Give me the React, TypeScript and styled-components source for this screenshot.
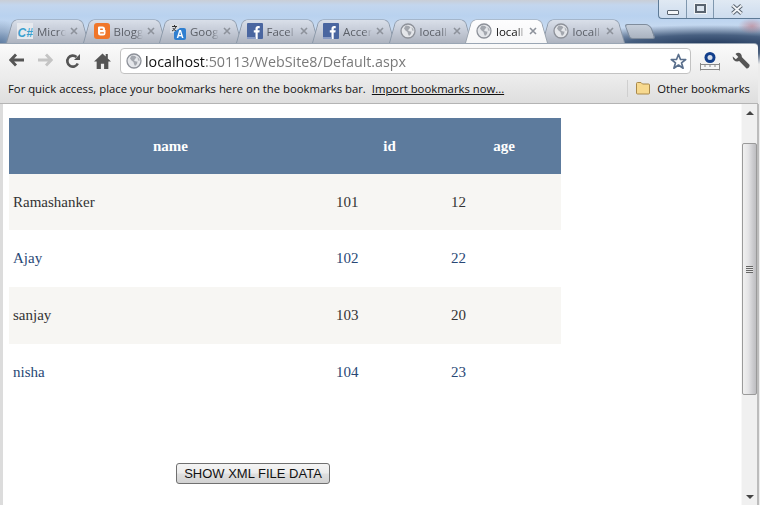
import React from 'react';
import styled, { createGlobalStyle } from 'styled-components';

const GlobalStyle = createGlobalStyle`
  html, body {
    margin: 0;
    padding: 0;
    overflow: hidden;
  }
`;

const Frame = styled.div`
  position: relative;
  width: 760px;
  height: 505px;
  display: flex;
  flex-direction: column;
  overflow: hidden;
  background:
    radial-gradient(ellipse 14px 8px at 752px 26px, rgba(190, 110, 120, 0.55) 0%, rgba(190, 110, 120, 0) 100%),
    radial-gradient(ellipse 170px 20px at 710px 45px, #22385a 0%, rgba(50, 75, 110, 0.85) 50%, rgba(120, 150, 190, 0) 100%),
    radial-gradient(ellipse 30px 24px at 0px 44px, #5c7a9f 0%, rgba(110, 140, 175, 0) 100%),
    linear-gradient(180deg, #c9ced6 0px, #c3d6ee 5px, #b9d2ef 16px, #cbdcf1 32px, #b7cbe3 44px, #ececec 44px);
`;

const WindowControls = styled.div`
  position: absolute;
  top: 0;
  right: 0;
  width: 102px;
  height: 19px;
  display: flex;
  box-sizing: border-box;
  border: 1px solid #5d7a96;
  border-top: none;
  border-right: none;
  border-bottom-left-radius: 4px;
  background: linear-gradient(180deg, #e0e9f3, #cddcee);
`;

const WindowButton = styled.div<{ $w: number }>`
  width: ${p => p.$w}px;
  display: flex;
  align-items: center;
  justify-content: center;
  border-right: 1px solid #7f97ae;
  box-sizing: border-box;
  &:last-child {
    border-right: none;
  }
`;

const MinGlyph = styled.div`
  width: 10px;
  height: 3px;
  margin-top: 6px;
  background: #f4f6f8;
  border: 1px solid #59636f;
  border-radius: 1px;
`;

const MaxGlyph = styled.div`
  width: 7px;
  height: 5px;
  margin-top: -1px;
  border: 2px solid #59636f;
  outline: 1px solid #f0f3f6;
  background: #dbe4ee;
`;

const TabStrip = styled.div`
  height: 43px;
  padding: 19px 0 0 6px;
  box-sizing: border-box;
  display: flex;
  flex: none;
`;

const Tab = styled.div<{ $active?: boolean }>`
  position: relative;
  z-index: ${p => (p.$active ? 2 : 1)};
  width: 82.5px;
  margin-right: -6px;
  height: 24px;
  flex: none;
  box-sizing: border-box;
  padding: 0 0 0 11px;
  display: flex;
  align-items: center;
  font-family: "Open Sans", "Noto Sans", sans-serif;
  font-size: 11.5px;
  color: ${p => (p.$active ? '#111' : '#5c6068')};
  &::before {
    content: '';
    position: absolute;
    inset: -5px 0 0 0;
    z-index: -1;
    border: 1px solid ${p => (p.$active ? '#9aa3ae' : '#8b98a8')};
    border-bottom: none;
    border-radius: 6px 6px 0 0;
    background: ${p => (p.$active
      ? 'linear-gradient(180deg, #fdfdfe, #f7f7f8)'
      : 'linear-gradient(180deg, #d9dfe9 0%, #c6ccd8 50%, #aeb4c0 100%)')};
    transform: perspective(36px) rotateX(14deg);
    transform-origin: bottom;
  }
`;

const TabLabel = styled.span`
  width: 29px;
  margin: 0 4px;
  overflow: hidden;
  white-space: nowrap;
  -webkit-mask-image: linear-gradient(90deg, #000 72%, transparent 100%);
  mask-image: linear-gradient(90deg, #000 72%, transparent 100%);
`;

const NewTab = styled.div`
  width: 24px;
  height: 13px;
  margin: 5px 0 0 9px;
  flex: none;
  border: 1px solid #7f8c9c;
  border-radius: 3px 5px 3px 3px;
  background: linear-gradient(180deg, #c6cfdb, #aab3c0);
  transform: skewX(20deg);
`;

const Toolbar = styled.div`
  height: 34px;
  margin-right: 2px;
  flex: none;
  position: relative;
  z-index: 1;
  display: flex;
  align-items: center;
  padding: 1px 8px 0 0;
  box-sizing: border-box;
  border-top: 1px solid #9aa6b4;
  border-top-right-radius: 4px;
  background: linear-gradient(180deg, #fafafa, #ececec);
`;

const NavIcon = styled.div<{ $w?: number }>`
  width: ${p => p.$w ?? 28}px;
  display: flex;
  justify-content: center;
  flex: none;
`;

const NavGroup = styled.div`
  display: flex;
  padding-left: 3px;
  width: 120px;
  box-sizing: border-box;
  flex: none;
`;

const Mirrored = styled.span`
  display: flex;
  transform: scaleX(-1);
`;

const Omnibox = styled.div`
  width: 571px;
  height: 26px;
  flex: none;
  box-sizing: border-box;
  display: flex;
  align-items: center;
  padding: 0 3px 0 5px;
  border: 1px solid #c2c2c2;
  border-radius: 4px;
  background: #fff;
  font-family: "Open Sans", "Noto Sans", sans-serif;
  font-size: 14.3px;
`;

const UrlText = styled.span`
  margin-left: 3px;
  flex: 1;
  color: #7a7a7a;
  white-space: nowrap;
  b {
    font-weight: 400;
    color: #111;
  }
`;

const BookmarkBar = styled.div`
  height: 27px;
  flex: none;
  margin-right: 2px;
  display: flex;
  align-items: center;
  box-sizing: border-box;
  padding: 0 8px 4px 8px;
  border-bottom: 1px solid #b4b4b4;
  background: linear-gradient(180deg, #ececec, #dedede);
  font-family: "Open Sans", "Noto Sans", sans-serif;
  font-size: 11.3px;
  color: #111;
  white-space: nowrap;
`;

const ImportLink = styled.span`
  margin-left: 6px;
  text-decoration: underline;
`;

const OtherBookmarks = styled.div`
  margin-left: auto;
  display: flex;
  align-items: center;
  gap: 6px;
  padding-left: 7px;
  border-left: 1px solid #cfcfcf;
  height: 17px;
`;

const Body = styled.div`
  flex: 1;
  min-height: 0;
  display: flex;
  margin-right: 1px;
  background: #fff;
  border-left: 3px solid #dcdcdc;
  border-right: 2px solid #bcbcbc;
`;

const Page = styled.div`
  flex: 1;
  padding: 14px 0 0 6px;
  min-width: 0;
`;

const Grid = styled.table`
  width: 552px;
  border-collapse: collapse;
  table-layout: fixed;
  font-family: "Liberation Serif", "Times New Roman", serif;
  font-size: 15px;
`;

const HeadCell = styled.th`
  height: 56px;
  padding: 0;
  background: #5d7b9d;
  color: #fff;
  font-weight: 700;
  text-align: center;
`;

const Row = styled.tr<{ $alt: boolean }>`
  background: ${p => (p.$alt ? '#f7f6f3' : '#fff')};
  color: ${p => (p.$alt ? '#333333' : '#284775')};
`;

const Cell = styled.td<{ $h: number }>`
  height: ${p => p.$h}px;
  padding: 0 4px;
`;

const DataButton = styled.button`
  display: block;
  width: 154px;
  height: 21px;
  margin: 63px 0 0 167px;
  padding: 0;
  box-sizing: border-box;
  border: 1px solid #707070;
  border-radius: 3px;
  background: linear-gradient(180deg, #f4f4f4 0%, #ececec 48%, #dfdfdf 52%, #d2d2d2 100%);
  font-family: "Liberation Sans", Arial, sans-serif;
  font-size: 13px;
  color: #111;
`;

const Scrollbar = styled.div`
  width: 16px;
  flex: none;
  display: flex;
  flex-direction: column;
  align-items: center;
  background: #f0f0f0;
  border-left: 1px solid #f8f8f8;
  box-sizing: border-box;
`;

const ScrollArrow = styled.div<{ $up?: boolean }>`
  height: 17px;
  width: 100%;
  flex: none;
  display: flex;
  align-items: center;
  justify-content: center;
  &::after {
    content: '';
    width: 0;
    height: 0;
    border-left: 4px solid transparent;
    border-right: 4px solid transparent;
    ${p => (p.$up ? 'border-bottom: 4px solid #444;' : 'border-top: 4px solid #444;')}
  }
`;

const ScrollTrack = styled.div`
  flex: 1;
  width: 100%;
  padding-top: 22px;
  box-sizing: border-box;
`;

const ScrollThumb = styled.div`
  height: 252px;
  box-sizing: border-box;
  border: 1px solid #9a9a9a;
  border-radius: 2px;
  background: linear-gradient(90deg, #f0f0f0 0%, #e4e4e6 40%, #cfcfd2 70%, #bdbdc0 100%);
  display: flex;
  align-items: center;
  justify-content: center;
`;

const Grip = styled.div`
  width: 7px;
  height: 7px;
  background: repeating-linear-gradient(180deg, #666 0, #666 1px, #e6e6e6 1px, #e6e6e6 2px);
`;

const Glyph = styled.svg`
  flex: none;
`;

const WideGlyph = styled.svg`
  flex: none;
  margin: 0 -1px;
`;

type FaviconKind = 'csharp' | 'blogger' | 'translate' | 'facebook' | 'globe';

const Globe = () => (
  <Glyph width="16" height="16" viewBox="0 0 16 16">
    <circle cx="8" cy="8" r="7" fill="#e4e6ea" stroke="#8d9199" strokeWidth="1.3" />
    <path d="M6 2.5l3 .5 1.500 1.500-1.500 1.500-1 1.500 2 1 1.500 0-.5 2.500-2 2-1-2-.5-2-2-1.500-1.500-2 1-2z" fill="#a3a7ae" />
    <path d="M11.500 4l2 2v2l-1.500-.5z" fill="#b0b4ba" />
  </Glyph>
);

const Favicon = ({ kind }: { kind: FaviconKind }) => {
  if (kind === 'csharp') {
    return (
      <Glyph width="16" height="16" viewBox="0 0 16 16">
        <rect width="16" height="16" fill="#e6e9ee" />
        <text x="0.5" y="13.5" fontFamily="Liberation Sans, sans-serif" fontWeight="700" fontStyle="italic" fontSize="12" fill="#3aa0cf">C#</text>
      </Glyph>
    );
  }
  if (kind === 'blogger') {
    return (
      <Glyph width="16" height="16" viewBox="0 0 16 16">
        <rect width="16" height="16" rx="3" fill="#f0762a" />
        <path d="M5 3.500h3.500a2.500 2.500 0 0 1 2.500 2.500v1h.5v3.200a2.300 2.300 0 0 1-2.300 2.300H6.300A2.300 2.300 0 0 1 4 10.200V4.500a1 1 0 0 1 1-1z" fill="#fff" />
        <rect x="6" y="5.600" width="3" height="1.300" rx=".6" fill="#f0762a" />
        <rect x="6" y="9.200" width="4" height="1.300" rx=".6" fill="#f0762a" />
      </Glyph>
    );
  }
  if (kind === 'translate') {
    return (
      <WideGlyph width="18" height="17" viewBox="0 0 18 17">
        <path d="M1 1h9v9H1z" fill="#d9dde3" />
        <path d="M3 3.500h5M5.500 2v1.500M7 3.500c-.5 2-2 3.500-4 4.500M4 5c.5 1.300 1.500 2.300 3 3" stroke="#333" fill="none" />
        <path d="M5 9l6-4h4a2 2 0 0 1 2 2v8a2 2 0 0 1-2 2H7a2 2 0 0 1-2-2z" fill="#2f7fd0" />
        <text x="7.5" y="15" fontFamily="Liberation Sans, sans-serif" fontWeight="700" fontSize="10" fill="#fff">A</text>
      </WideGlyph>
    );
  }
  if (kind === 'facebook') {
    return (
      <Glyph width="16" height="16" viewBox="0 0 16 16">
        <rect width="16" height="16" rx="1" fill="#4a66a0" />
        <path d="M8.500 16V9.500H6.800V7.200h1.700V5.600C8.500 3.900 9.500 3 11 3h1.700v2.200h-1.100c-.7 0-.9.300-.9.900v1.100h2l-.3 2.300h-1.700V16z" fill="#fff" />
        <rect y="14" width="8.500" height="2" fill="#8a9cc5" />
      </Glyph>
    );
  }
  return <Globe />;
};

const BackIcon = ({ color }: { color: string }) => (
  <svg width="16" height="14" viewBox="0 0 16 14">
    <path d="M7 1.500L1.800 7 7 12.500M2.500 7H15" fill="none" stroke={color} strokeWidth="2.800" />
  </svg>
);

const ReloadIcon = () => (
  <svg width="16" height="16" viewBox="0 0 16 16">
    <path d="M12.800 10.500A5.500 5.500 0 1 1 11.500 4" fill="none" stroke="#555" strokeWidth="2.600" />
    <path d="M9 7h6V1z" fill="#555" />
  </svg>
);

const HomeIcon = () => (
  <svg width="17" height="16" viewBox="0 0 16 15">
    <path d="M8 .5L0 8h2.500v7h4v-5h3v5h4V8H16l-3-2.800V1h-2v2.300z" fill="#555" />
  </svg>
);

const StarIcon = () => (
  <svg width="17" height="17" viewBox="0 0 17 17">
    <path d="M8.500 1.500l2 5h5.200l-4.200 3.300 1.600 5.400-4.600-3.200-4.600 3.200 1.600-5.400L1.300 6.500h5.200z" fill="#fff" stroke="#5a6f8c" strokeWidth="1.700" strokeLinejoin="round" />
  </svg>
);

const ExtensionIcon = () => (
  <svg width="20" height="19" viewBox="0 0 20 19">
    <circle cx="10" cy="5.500" r="5.500" fill="#123f8c" />
    <circle cx="10" cy="5.500" r="2.500" fill="#d5deec" />
    <path d="M.5 12.500h19v5H.5z" fill="#f6f6f6" stroke="#8a8a8a" />
    <path d="M.5 11v7.500M19.500 11v7.500M5 13v2M10 13v2M15 13v2" stroke="#8a8a8a" />
  </svg>
);

const WrenchIcon = () => (
  <svg width="18" height="18" viewBox="0 0 18 18">
    <path d="M.8 4.500L3.800 7.200 6.300 5 3.500 1.900C6-.6 9.900 1 9.800 4.500c0 .4 0 .6.200.8l7.500 7.500c.5 1.700-1 3.900-3 3.600L7.200 9C4 10.600.2 8 .8 4.500z" fill="#555" />
  </svg>
);

const FolderIcon = () => (
  <svg width="16" height="14" viewBox="0 0 16 14">
    <path d="M1.500 2.500a1 1 0 0 1 1-1H6l1.500 1.500h6a1 1 0 0 1 1 1v8a1 1 0 0 1-1 1h-11a1 1 0 0 1-1-1z" fill="#f7d98f" stroke="#a9894a" />
  </svg>
);

const CloseIcon = () => (
  <Glyph width="8" height="8" viewBox="0 0 8 8">
    <path d="M1 1l6 6M7 1L1 7" stroke="#8d929b" strokeWidth="1.600" />
  </Glyph>
);

const WindowCloseGlyph = () => (
  <svg width="14" height="11" viewBox="0 0 14 11">
    <path d="M2.500 1.500l9 8M11.500 1.500l-9 8" stroke="#59636f" strokeWidth="3.800" />
    <path d="M2.500 1.500l9 8M11.500 1.500l-9 8" stroke="#f2f5f8" strokeWidth="1.800" />
  </svg>
);

const tabs: { title: string; icon: FaviconKind; active?: boolean }[] = [
  { title: 'Micro', icon: 'csharp' },
  { title: 'Blogg', icon: 'blogger' },
  { title: 'Goog', icon: 'translate' },
  { title: 'Facel', icon: 'facebook' },
  { title: 'Accer', icon: 'facebook' },
  { title: 'locall', icon: 'globe' },
  { title: 'locall', icon: 'globe', active: true },
  { title: 'locall', icon: 'globe' },
];

const people = [
  { name: 'Ramashanker', id: 101, age: 12, h: 56 },
  { name: 'Ajay', id: 102, age: 22, h: 57 },
  { name: 'sanjay', id: 103, age: 20, h: 57 },
  { name: 'nisha', id: 104, age: 23, h: 56 },
];

const App = () => (
  <Frame>
    <GlobalStyle />
    <WindowControls>
      <WindowButton $w={28}><MinGlyph /></WindowButton>
      <WindowButton $w={27}><MaxGlyph /></WindowButton>
      <WindowButton $w={46}><WindowCloseGlyph /></WindowButton>
    </WindowControls>
    <TabStrip>
      {tabs.map((tab, i) => (
        <Tab key={i} $active={tab.active}>
          <Favicon kind={tab.icon} />
          <TabLabel>{tab.title}</TabLabel>
          <CloseIcon />
        </Tab>
      ))}
      <NewTab />
    </TabStrip>
    <Toolbar>
      <NavGroup>
        <NavIcon><BackIcon color="#555" /></NavIcon>
        <NavIcon><Mirrored><BackIcon color="#c4c4c4" /></Mirrored></NavIcon>
        <NavIcon><ReloadIcon /></NavIcon>
        <NavIcon $w={30}><HomeIcon /></NavIcon>
      </NavGroup>
      <Omnibox>
        <Globe />
        <UrlText><b>localhost</b>:50113/WebSite8/Default.aspx</UrlText>
        <StarIcon />
      </Omnibox>
      <NavIcon $w={38}><ExtensionIcon /></NavIcon>
      <NavIcon $w={24}><WrenchIcon /></NavIcon>
    </Toolbar>
    <BookmarkBar>
      For quick access, place your bookmarks here on the bookmarks bar.
      <ImportLink>Import bookmarks now...</ImportLink>
      <OtherBookmarks><FolderIcon />Other bookmarks</OtherBookmarks>
    </BookmarkBar>
    <Body>
      <Page>
        <Grid>
          <colgroup>
            <col style={{ width: 323 }} />
            <col style={{ width: 115 }} />
            <col style={{ width: 114 }} />
          </colgroup>
          <thead>
            <tr>
              <HeadCell>name</HeadCell>
              <HeadCell>id</HeadCell>
              <HeadCell>age</HeadCell>
            </tr>
          </thead>
          <tbody>
            {people.map((p, i) => (
              <Row key={p.id} $alt={i % 2 === 0}>
                <Cell $h={p.h}>{p.name}</Cell>
                <Cell $h={p.h}>{p.id}</Cell>
                <Cell $h={p.h}>{p.age}</Cell>
              </Row>
            ))}
          </tbody>
        </Grid>
        <DataButton>SHOW XML FILE DATA</DataButton>
      </Page>
      <Scrollbar>
        <ScrollArrow $up />
        <ScrollTrack><ScrollThumb><Grip /></ScrollThumb></ScrollTrack>
        <ScrollArrow />
      </Scrollbar>
    </Body>
  </Frame>
);

export default App;
